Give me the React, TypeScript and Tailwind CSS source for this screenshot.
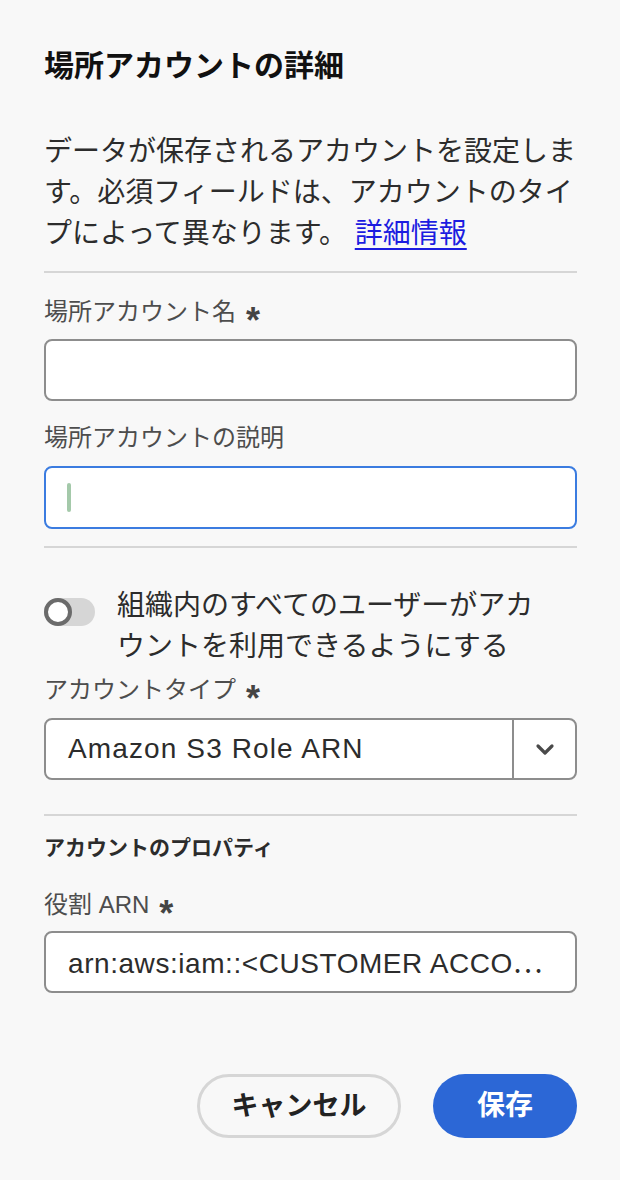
import React from 'react';

const Asterisk: React.FC = () => (
  <span className="ml-[10px] inline-block h-[34px] translate-y-[9px] text-[36px] font-bold leading-[34px] text-[#444]">*</span>
);

export default function App() {
  return (
    <div className="min-h-[1180px] w-[620px] bg-[#f8f8f8] pl-[44px] pr-[43px] pt-[46px] font-['Liberation_Sans','Noto_Sans_CJK_JP',sans-serif]">
      {/* Header */}
      <h1 className="text-[30px] font-bold leading-[40px] text-[#111]">場所アカウントの詳細</h1>
      <p className="mt-[45px] text-[28px] leading-[41px] text-[#2c2c2c]">
        データが保存されるアカウントを設定しま
        <br />
        す。必須フィールドは、アカウントのタイ
        <br />
        プによって異なります。{' '}
        <a href="#" className="text-[#1c1ce0] underline underline-offset-[5px]">
          詳細情報
        </a>
      </p>
      <div className="mt-[17px] h-[2px] bg-[#d6d6d6]" />

      {/* Name */}
      <label className="mt-[22px] flex h-[34px] items-center text-[24px] leading-[34px] text-[#4d4d4d]">
        場所アカウント名
        <Asterisk />
      </label>
      <div className="mt-[10px] h-[62px] rounded-[8px] border-2 border-[#8d8d8d] bg-white" />

      {/* Description */}
      <label className="mt-[20px] block h-[34px] text-[24px] leading-[34px] text-[#4d4d4d]">場所アカウントの説明</label>
      <div className="mt-[11px] flex h-[63px] items-center rounded-[8px] border-2 border-[#3b7ce0] bg-white pl-[21px]">
        <div className="h-[29px] w-[4px] rounded-[2px] bg-[#a4c9aa]" />
      </div>
      <div className="mt-[17px] h-[2px] bg-[#d6d6d6]" />

      {/* Toggle */}
      <div className="mt-[37px] flex items-start gap-[22px]">
        <div className="mt-[13px] flex h-[28px] w-[51px] shrink-0 items-center rounded-full bg-[#d6d6d6]">
          <div className="h-[28px] w-[28px] rounded-full border-[4px] border-[#6b6b6b] bg-white" />
        </div>
        <p className="text-[28px] leading-[41px] text-[#2c2c2c]">
          組織内のすべてのユーザーがアカ
          <br />
          ウントを利用できるようにする
        </p>
      </div>

      {/* Account type */}
      <label className="mt-[6px] flex h-[34px] items-center text-[24px] leading-[34px] text-[#4d4d4d]">
        アカウントタイプ
        <Asterisk />
      </label>
      <div className="mt-[11px] flex h-[62px] items-stretch rounded-[8px] border-2 border-[#8d8d8d] bg-white">
        <div className="flex flex-1 items-center pl-[22px] text-[28px] tracking-[0.04em] text-[#2c2c2c]">
          Amazon S3 Role ARN
        </div>
        <div className="flex w-[63px] items-center justify-center border-l-2 border-[#8d8d8d]">
          <svg width="20" height="14" viewBox="0 0 20 14" fill="none">
            <path d="M3 4l7 7 7-7" stroke="#4a4a4a" strokeWidth="3.2" strokeLinecap="round" strokeLinejoin="round" />
          </svg>
        </div>
      </div>
      <div className="mt-[34px] h-[2px] bg-[#d6d6d6]" />

      {/* Properties */}
      <h2 className="mt-[17px] text-[21px] font-bold leading-[30px] text-[#2c2c2c]">アカウントのプロパティ</h2>
      <label className="mt-[25px] flex h-[34px] items-center text-[24px] leading-[34px] text-[#4d4d4d]">
        役割 ARN
        <Asterisk />
      </label>
      <div className="mt-[9px] flex h-[62px] items-center overflow-hidden rounded-[8px] border-2 border-[#8d8d8d] bg-white pl-[22px]">
        <span className="whitespace-nowrap text-[28px] tracking-[0.02em] text-[#2c2c2c]">
          arn:aws:iam::&lt;CUSTOMER ACCO
          <span className="font-['Noto_Sans_CJK_JP',sans-serif] tracking-normal">⋯</span>
        </span>
      </div>

      {/* Actions */}
      <div className="mt-[81px] flex justify-end gap-[32px]">
        <button className="h-[64px] w-[204px] rounded-full border-[3px] border-[#d6d6d6] text-[27px] font-bold text-[#222]">
          キャンセル
        </button>
        <button className="h-[64px] w-[144px] rounded-full bg-[#2c67d6] text-[28px] font-bold text-white">
          保存
        </button>
      </div>
    </div>
  );
}
